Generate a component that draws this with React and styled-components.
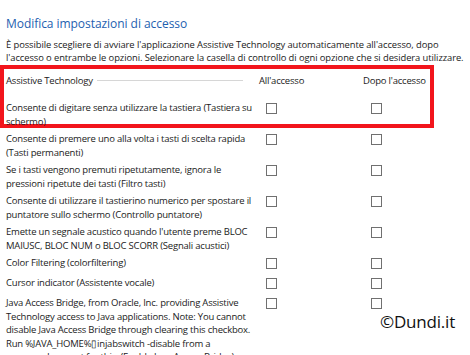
import React from "react";
import styled, { createGlobalStyle } from "styled-components";

const Global = createGlobalStyle`
  html, body { margin: 0; padding: 0; background: #ffffff; }
  body { font-family: "Open Sans", "Noto Sans", sans-serif; color: #1b1b1b; overflow: hidden; }
`;

const Page = styled.div`
  position: relative;
  width: 470px;
  height: 355px;
  overflow: hidden;
  padding: 16px 0 0 6px;
  box-sizing: border-box;
`;

const Title = styled.h1`
  margin: 0;
  font-size: 12px;
  font-weight: 400;
  color: #1e5fb0;
  line-height: 16px;
  letter-spacing: -0.05px;
`;

const Intro = styled.p`
  margin: 5.5px 0 0 0;
  font-size: 9.4px;
  line-height: 13px;
  letter-spacing: -0.08px;
`;

const Line = styled.span`
  display: block;
  white-space: nowrap;
`;

const Highlight = styled.div`
  margin: 1.5px 0 0 -6px;
  width: 434px;
  height: 63px;
  box-sizing: border-box;
  border: 4px solid #f2151c;
  padding: 0 0 0 2px;
`;

const Row = styled.div`
  display: grid;
  grid-template-columns: 253px 104px 1fr;
  padding: ${(p) => p.$pad || "4px 0 0 0"};
  font-size: 9.5px;
  line-height: 13.5px;
  letter-spacing: -0.2px;
`;

const HeaderLabel = styled.div`
  display: flex;
  align-items: center;
  gap: 4px;
  padding-right: 16px;
`;

const Rule = styled.div`
  flex: 1;
  height: 1px;
  background: #d6d6d6;
`;

const ColHead = styled.div`
  white-space: nowrap;
`;

const Cell = styled.div`
  min-height: 16px;
  padding-left: ${(p) => p.$indent}px;
`;

const Box = styled.span`
  display: block;
  width: 9px;
  height: 9px;
  border: 1px solid #707070;
  background: #fff;
  margin-top: 2px;
`;

const Watermark = styled.div`
  position: absolute;
  left: 380px;
  top: 310px;
  font-family: "Open Sans", sans-serif;
  font-size: 17px;
  color: #111;
  letter-spacing: -0.2px;
`;

const first = ["Consente di digitare senza utilizzare la tastiera (Tastiera su", "schermo)"];

const items = [
  ["Consente di premere uno alla volta i tasti di scelta rapida", "(Tasti permanenti)"],
  ["Se i tasti vengono premuti ripetutamente, ignora le", "pressioni ripetute dei tasti (Filtro tasti)"],
  ["Consente di utilizzare il tastierino numerico per spostare il", "puntatore sullo schermo (Controllo puntatore)"],
  ["Emette un segnale acustico quando l'utente preme BLOC", "MAIUSC, BLOC NUM o BLOC SCORR (Segnali acustici)"],
  ["Color Filtering (colorfiltering)"],
  ["Cursor indicator (Assistente vocale)"],
  [
    "Java Access Bridge, from Oracle, Inc. providing Assistive",
    "Technology access to Java applications. Note: You cannot",
    "disable Java Access Bridge through clearing this checkbox.",
    "Run %JAVA_HOME%\u25AFinjabswitch -disable from a",
    "command prompt for this. (Enable Java Access Bridge)",
  ],
];

function OptionRow({ lines, pad }) {
  return (
    <Row $pad={pad}>
      <div>
        {lines.map((l, i) => (
          <Line key={i}>{l}</Line>
        ))}
      </div>
      <Cell $indent={7}><Box /></Cell>
      <Cell $indent={8}><Box /></Cell>
    </Row>
  );
}

export default function App() {
  return (
    <>
      <Global />
      <Page>
        <Title>Modifica impostazioni di accesso</Title>
        <Intro>
          <Line>È possibile scegliere di avviare l'applicazione Assistive Technology automaticamente all'accesso, dopo</Line>
          <Line>l'accesso o entrambe le opzioni. Selezionare la casella di controllo di ogni opzione che si desidera utilizzare.</Line>
        </Intro>
        <Highlight>
          <Row $pad="5px 0 13.5px 0">
            <HeaderLabel>
              <span>Assistive Technology</span>
              <Rule />
            </HeaderLabel>
            <ColHead>All'accesso</ColHead>
            <ColHead>Dopo l'accesso</ColHead>
          </Row>
          <OptionRow lines={first} pad="0" />
        </Highlight>
        {items.map((lines, i) => (
          <OptionRow key={i} lines={lines} />
        ))}
        <Watermark>©Dundi.it</Watermark>
      </Page>
    </>
  );
}
